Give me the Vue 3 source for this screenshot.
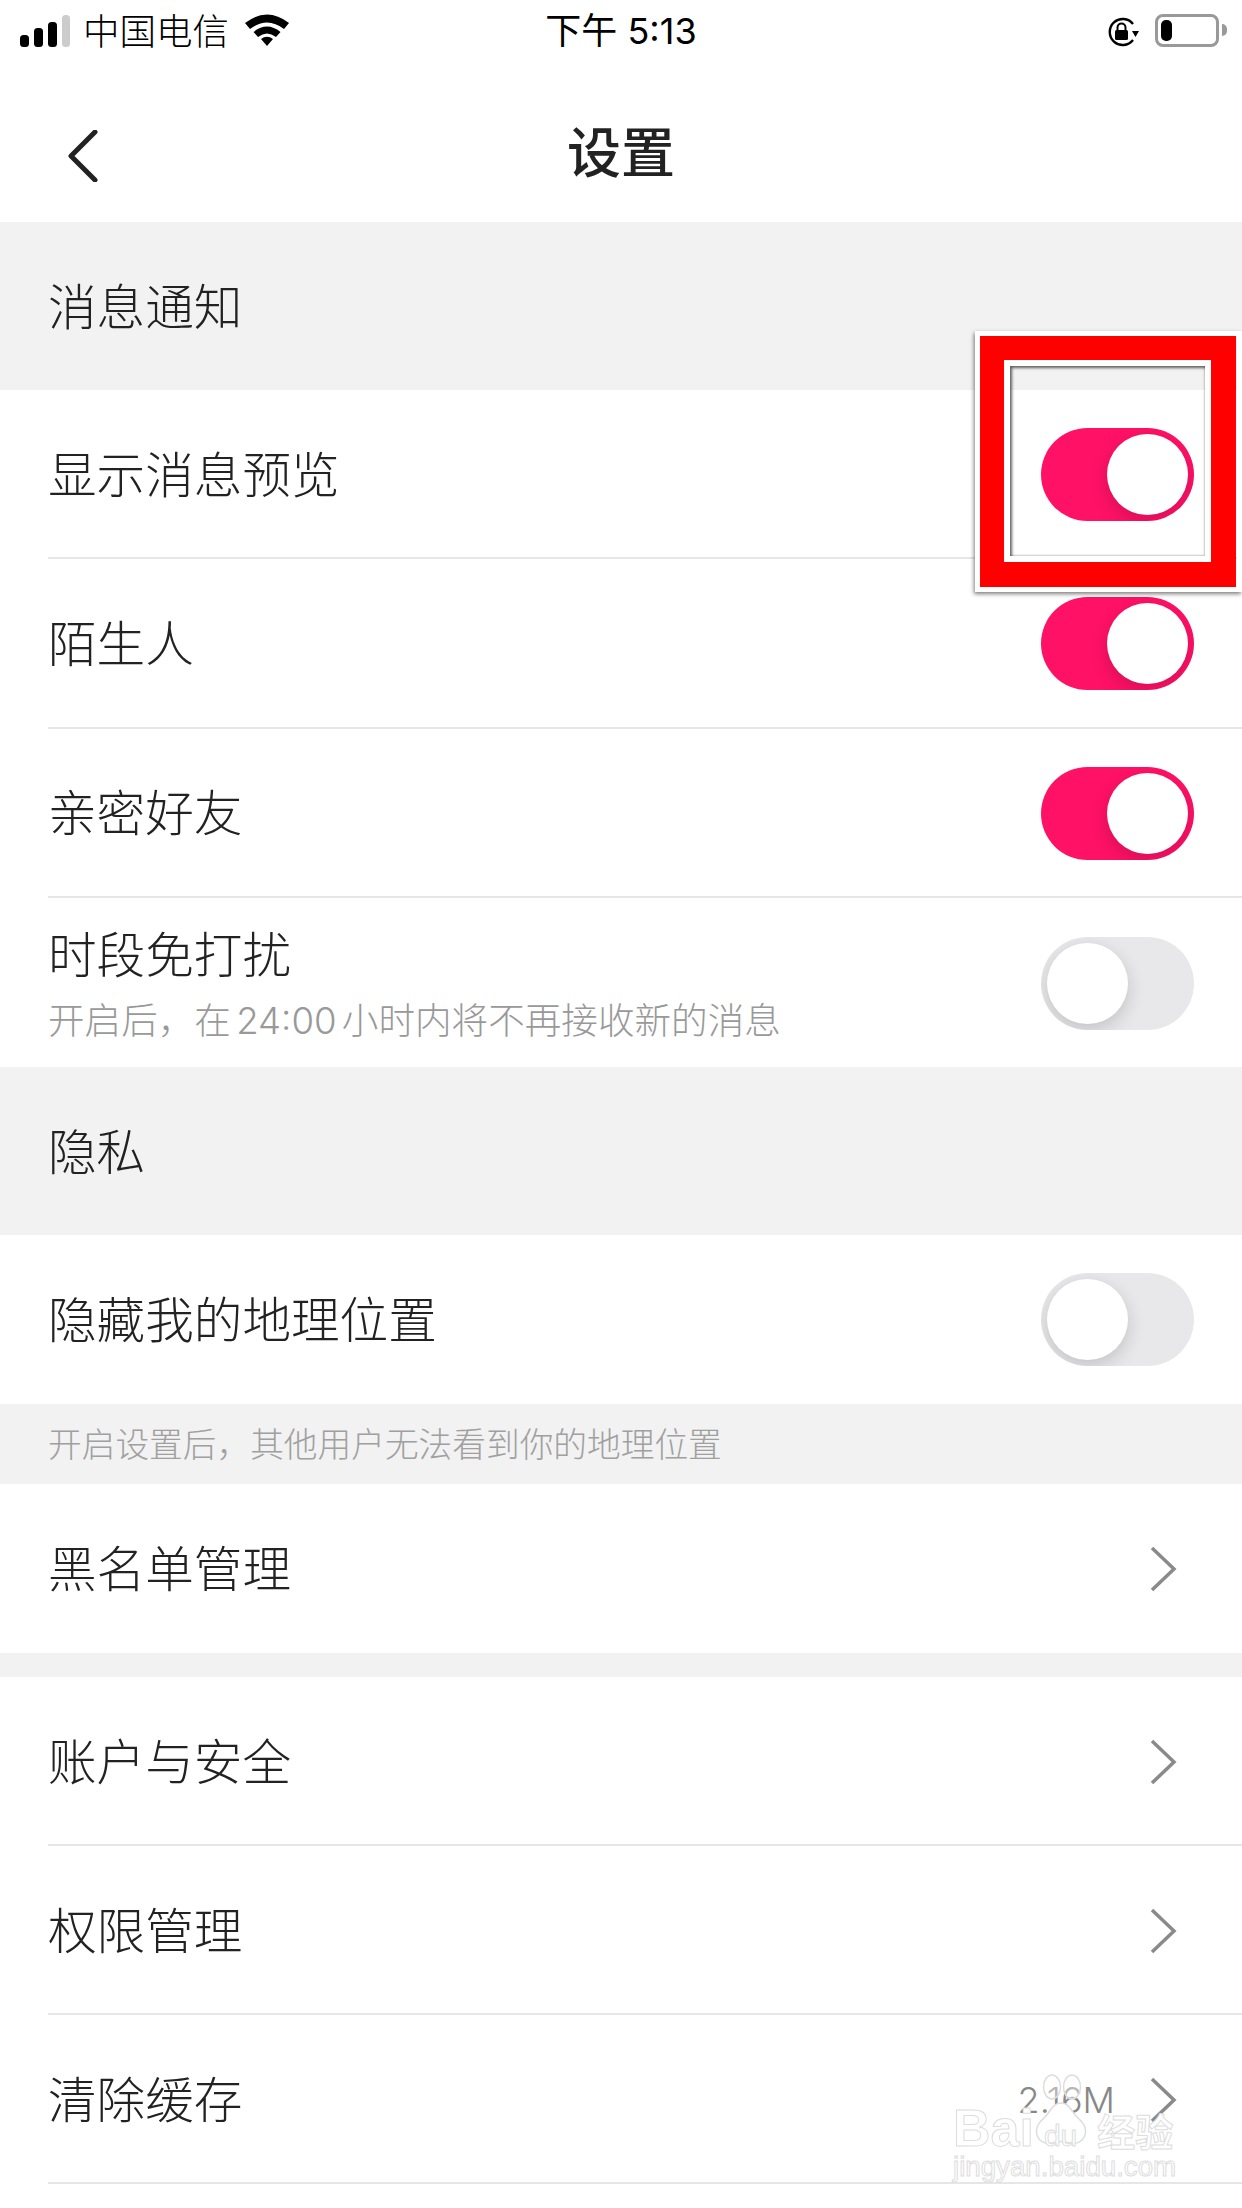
<script setup>
const notify = [
  { label: '显示消息预览', on: true },
  { label: '陌生人', on: true },
  { label: '亲密好友', on: true },
]
const account = [
  { label: '账户与安全' },
  { label: '权限管理' },
  { label: '清除缓存', value: '2.16M' },
]
</script>

<template>
  <div class="page">
    <div class="status">
      <div class="status-left">
        <svg class="signal" width="50" height="32" viewBox="0 0 50 32">
          <rect x="0" y="20" width="9" height="12" rx="3.5" fill="#000" />
          <rect x="14" y="13" width="9" height="19" rx="3.5" fill="#000" />
          <rect x="28" y="7" width="9" height="25" rx="3.5" fill="#000" />
          <rect x="42" y="0" width="8" height="32" rx="3.5" fill="#ccc" />
        </svg>
        <span class="carrier">中国电信</span>
        <svg class="wifi" width="46" height="33" viewBox="0 0 46 33">
          <path d="M1 10 Q23 -7 45 10 L40 16 Q23 3 6 16Z" fill="#000" />
          <path d="M9.5 19 Q23 8 36.5 19 L32 24 Q23 17 14 24Z" fill="#000" />
          <path d="M17 26 Q23 21.5 29 26 L23 33Z" fill="#000" />
        </svg>
      </div>
      <span class="time">下午 5:13</span>
      <div class="status-right">
        <svg class="lock" width="32" height="30" viewBox="0 0 32 30">
          <path d="M26 23 A13 13 0 1 1 26 7" fill="none" stroke="#000" stroke-width="2.4" />
          <path d="M25 14 H32 L28.5 20Z" fill="#000" />
          <rect x="8" y="13" width="13" height="10" rx="1.5" fill="#000" />
          <path d="M10.5 13 V10.5 A4 4 0 0 1 18.5 10.5 V13" fill="none" stroke="#000" stroke-width="2" />
        </svg>
        <div class="battery"><div class="battery-fill"></div></div>
        <div class="battery-tip"></div>
      </div>
    </div>

    <div class="nav">
      <svg class="back" width="30" height="52" viewBox="0 0 30 52">
        <path d="M27 2 L3 26 L27 50" fill="none" stroke="#222" stroke-width="5" stroke-linecap="round" stroke-linejoin="round" />
      </svg>
      <h1>设置</h1>
    </div>

    <div class="section">消息通知</div>
    <div v-for="r in notify" :key="r.label" class="row tight">
      <span class="label">{{ r.label }}</span>
      <div class="toggle" :class="{ on: r.on }"><div class="knob"></div></div>
    </div>
    <div class="row tight last">
      <div class="stack">
        <span class="label">时段免打扰</span>
        <span class="sub">开启后，在 24:00 小时内将不再接收新的消息</span>
      </div>
      <div class="toggle"><div class="knob"></div></div>
    </div>

    <div class="section">隐私</div>
    <div class="row last">
      <span class="label">隐藏我的地理位置</span>
      <div class="toggle"><div class="knob"></div></div>
    </div>
    <div class="hint">开启设置后，其他用户无法看到你的地理位置</div>
    <div class="row last link">
      <span class="label">黑名单管理</span>
      <svg class="chev" width="28" height="46" viewBox="0 0 28 46">
        <path d="M3 2 L25 23 L3 44" fill="none" stroke="#8a8a8a" stroke-width="3.5" />
      </svg>
    </div>
    <div class="gap"></div>
    <div v-for="r in account" :key="r.label" class="row link">
      <span class="label">{{ r.label }}</span>
      <span v-if="r.value" class="value">{{ r.value }}</span>
      <svg class="chev" width="28" height="46" viewBox="0 0 28 46">
        <path d="M3 2 L25 23 L3 44" fill="none" stroke="#8a8a8a" stroke-width="3.5" />
      </svg>
    </div>

    <!-- annotation frame drawn over the first toggle -->
    <div class="mark"><div class="mark-red"><div class="mark-white"><div class="mark-hole"></div></div></div></div>

    <!-- watermark -->
    <div class="wm">
      <svg class="wm-paw" width="58" height="72" viewBox="0 0 58 72">
        <ellipse cx="20" cy="13" rx="8.5" ry="12" fill="#fff" fill-opacity=".4" stroke="#ddd" stroke-width="1.5" />
        <ellipse cx="40" cy="13" rx="8.5" ry="12" fill="#fff" fill-opacity=".4" stroke="#ddd" stroke-width="1.5" />
        <path d="M29 29 C38 29 39 38 47 45 C60 56 52 72 38 69 C32 67 26 67 20 69 C6 72 -2 56 11 45 C19 38 20 29 29 29Z" fill="#fff" stroke="#ddd" stroke-width="1.5" />
      </svg>
      <div class="wm-logo"><span>Bai</span><span class="wm-du">du</span><span class="wm-cn">经验</span></div>
      <div class="wm-url">jingyan.baidu.com</div>
    </div>
  </div>
</template>

<style scoped>
.page { position: relative; width: 1242px; height: 2208px; overflow: hidden; background: #fff; color: #222; font-family: "Noto Sans CJK SC", "Liberation Sans", sans-serif; }
.status { position: relative; height: 62px; display: flex; justify-content: space-between; align-items: center; padding: 0 15px 0 20px; box-sizing: border-box; color: #000; }
.status-left { display: flex; align-items: center; }
.signal { margin-top: -1px; }
.carrier { font-size: 36.5px; line-height: 62px; margin-left: 13px; margin-top: -3px; font-weight: 300; }
.wifi { margin-left: 15px; margin-top: -4px; }
.time { position: absolute; left: 0; right: 0; top: 0; text-align: center; font-size: 36px; line-height: 62px; font-family: Inter, "Noto Sans CJK SC", sans-serif; font-weight: 400; }
.status-right { display: flex; align-items: center; }
.lock { margin-right: 16px; margin-top: 1px; }
.battery { width: 64px; height: 33px; box-sizing: border-box; border: 3px solid #999; border-radius: 8px; padding: 3px; margin-top: -2px; }
.battery-fill { width: 11px; height: 100%; background: #000; border-radius: 5px; }
.battery-tip { width: 5px; height: 12px; background: #999; margin-left: 3px; border-radius: 0 5px 5px 0; margin-top: -2px; }
.nav { position: relative; height: 160px; box-sizing: border-box; padding-top: 14px; display: flex; align-items: center; justify-content: center; }
.back { position: absolute; left: 68px; top: 68px; }
.nav h1 { margin: 0; font-size: 54px; font-weight: 500; color: #222; }
.section { height: 168px; box-sizing: border-box; padding: 0 0 4px 48px; background: #f2f2f2; display: flex; align-items: center; font-size: 48.6px; font-weight: 300; }
.row { position: relative; height: 169px; display: flex; align-items: center; justify-content: space-between; padding: 0 48px; box-sizing: border-box; }
.row.tight { height: 169.25px; }
.row::after { content: ""; position: absolute; left: 48px; right: 0; bottom: 0; height: 2px; background: #e6e6e6; }
.row.last::after { display: none; }
.row.link { padding-right: 65px; }
.label { font-size: 48.6px; font-weight: 300; line-height: 64px; padding-bottom: 6px; }
.stack { display: flex; flex-direction: column; }
.stack .label { padding-bottom: 0; }
.stack + .toggle { margin-top: 2px; }
.sub { font-family: Inter, "Noto Sans CJK SC", sans-serif; font-size: 36.6px; line-height: 46px; word-spacing: -5px; color: #999; font-weight: 300; margin-top: 14px; white-space: nowrap; }
.value { font-family: Inter, sans-serif; margin-left: auto; margin-right: 34px; font-size: 36px; color: #888; font-weight: 300; }
.toggle { position: relative; width: 153px; height: 93px; border-radius: 47px; background: #e8e8ea; overflow: hidden; flex: none; }
.toggle.on { background: #ff1166; }
.knob { position: absolute; top: 6px; left: 6px; width: 81px; height: 81px; border-radius: 50%; background: #fff; box-shadow: 0 6px 18px rgba(0,0,0,.16); }
.toggle.on .knob { left: 66px; }
.hint { height: 80px; box-sizing: border-box; padding: 0 0 4px 48px; background: #f2f2f2; display: flex; align-items: center; font-size: 33.7px; color: #a0a0a0; font-weight: 300; }
.gap { height: 24px; background: #f2f2f2; }
.mark { position: absolute; left: 975px; top: 331px; width: 267px; height: 261px; box-sizing: border-box; border: 5px solid #fff; box-shadow: -1px 2px 4px rgba(0,0,0,.5); }
.mark-red { width: 256px; height: 251px; box-sizing: border-box; border-style: solid; border-color: #f00; border-width: 24px 25px 25px 24px; }
.mark-white { width: 207px; height: 202px; box-sizing: border-box; border: 6px solid #fff; }
.mark-hole { width: 195px; height: 190px; box-shadow: inset 2px 2px 3px rgba(0,0,0,.6), inset -1px -1px 2px rgba(0,0,0,.2); }
.wm { position: absolute; left: 950px; top: 2072px; width: 230px; height: 112px; font-family: "Liberation Sans", "Noto Sans CJK SC", sans-serif; }
.wm-paw { position: absolute; left: 82px; top: 2px; }
.wm-logo { position: absolute; left: 3px; top: 26px; font-size: 52px; line-height: 60px; font-weight: 700; color: #fff; -webkit-text-stroke: 1px #ddd; white-space: nowrap; }
.wm-du { font-size: 30px; margin-left: 10px; margin-right: 20px; font-weight: 400; }
.wm-cn { font-size: 38px; font-family: "Noto Sans CJK SC", sans-serif; }
.wm-url { position: absolute; left: 3px; top: 78px; font-size: 27.7px; line-height: 34px; color: #fff; -webkit-text-stroke: 1px #ddd; white-space: nowrap; }
</style>
